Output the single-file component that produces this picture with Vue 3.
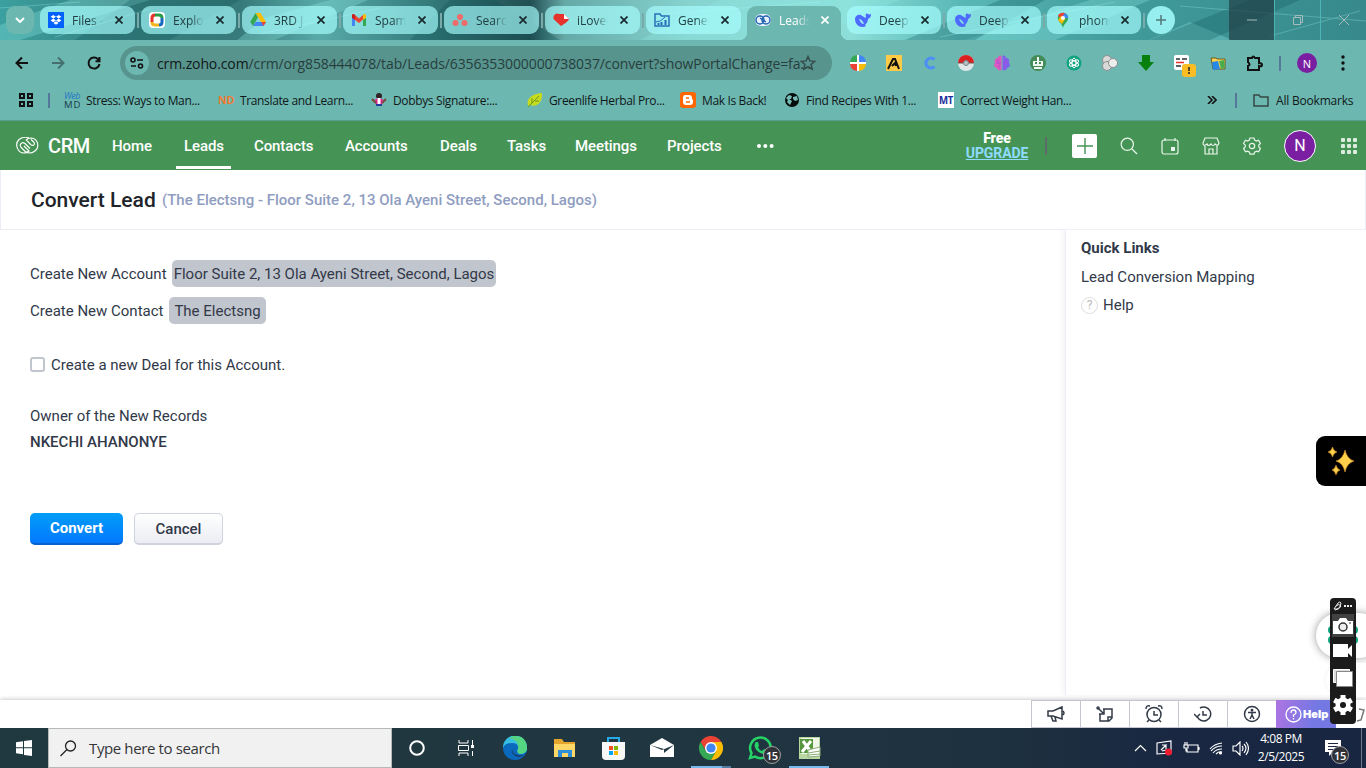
<script setup>
const tabs = [
  { label: 'Files -', icon: 'dropbox' },
  { label: 'Explore', icon: 'swirl' },
  { label: '3RD J', icon: 'drive' },
  { label: 'Spam (', icon: 'gmail' },
  { label: 'Search', icon: 'asana' },
  { label: 'iLovePDF', icon: 'heart' },
  { label: 'Genera', icon: 'folderChart' },
  { label: 'Leads', icon: 'zohoTab', active: true },
  { label: 'DeepS', icon: 'whale' },
  { label: 'DeepS', icon: 'whale' },
  { label: 'phone', icon: 'maps' },
]
const extensions = ['pinwheel', 'apollo', 'cLetter', 'pokeball', 'brain', 'robot', 'gpt', 'spheres', 'download', 'notes', 'folders', 'puzzle']
const bookmarks = [
  { label: 'Stress: Ways to Man...', icon: 'webmd' },
  { label: 'Translate and Learn...', icon: 'nd' },
  { label: 'Dobbys Signature:...', icon: 'dobby' },
  { label: 'Greenlife Herbal Pro...', icon: 'leaf' },
  { label: 'Mak Is Back!', icon: 'blogger' },
  { label: 'Find Recipes With 1...', icon: 'globe' },
  { label: 'Correct Weight Han...', icon: 'mt' },
]
const nav = ['Home', 'Leads', 'Contacts', 'Accounts', 'Deals', 'Tasks', 'Meetings', 'Projects']
const tools = ['megaphone', 'sticky', 'alarm', 'history', 'access']
const apps = ['cortana', 'taskview', 'edge', 'explorer', 'store', 'mail', 'chrome', 'whatsapp', 'excel']

const t = (x, y, size, fill, text, extra = '') =>
  `<text x="${x}" y="${y}" font-size="${size}" fill="${fill}" font-family="Open Sans, sans-serif" text-anchor="middle" ${extra}>${text}</text>`

const whale = '<path fill="#4d6bfe" d="M0 7C0 4 3 2 6 3l1 1c1 0 2 1 3 2l1-1c-1-2 0-3 1-4 0 1 2 2 4 1 0 3-1 4-3 5 0 3-2 5-3 6l1 1c-5 3-11-1-11-7zm4 0c1 3 3 5 5 5-1-3-3-5-5-5z"/>'

const icons = {
  dropbox: '<path fill="#0061ff" d="M0 0h16v16H0z"/><path fill="#fff" d="M5.3 3 2.6 4.8l2.7 1.8L8 4.8zm5.4 0L8 4.8l2.7 1.8 2.7-1.8zM5.3 6.6 2.6 8.4l2.7 1.8L8 8.4zm5.4 0L8 8.4l2.7 1.8 2.7-1.8zM8 9.3l-2.6 1.7L8 12.8l2.6-1.8z"/>',
  swirl: '<rect width="16" height="16" rx="4" fill="#fff"/><g fill="none" stroke-width="3"><path stroke="#e5322d" d="M3 10V6q0-3 3-3"/><path stroke="#279b48" d="M6 3h4q3 0 3 3"/><path stroke="#1769c2" d="M13 6v4q0 3-3 3"/><path stroke="#f2b61a" d="M10 13H6q-3 0-3-3"/></g>',
  drive: '<path fill="#fbbc04" d="M5.5 1h5L16 10h-5z"/><path fill="#34a853" d="M5.5 1 8 5.2 3 14 .2 10z"/><path fill="#4285f4" d="m3 14 2.8-4H16l-2.6 4z"/><path fill="#ea4335" d="M11.5 10H16l-2.6 4z"/>',
  gmail: '<path fill="#4285f4" d="M1 4v10h3V7z"/><path fill="#34a853" d="M15 4v10h-3V7z"/><path fill="#ea4335" d="M1 3q1-2 3 0l4 3.5L12 3v4.5L8 11 1 5.5z"/><path fill="#fbbc04" d="m12 3q2-2 3 0v3l-3 2z"/><path fill="#c5221f" d="M1 3q1-2 3 0v5L1 5.7z"/>',
  asana: '<g fill="#f06a6a"><circle cx="8" cy="5" r="3"/><circle cx="3.5" cy="11" r="3"/><circle cx="12.5" cy="11" r="3"/></g>',
  heart: '<path fill="#e5322d" d="M8 14 1 7.5C-1 4 3 0 6 2h5l5 5q-1 3-8 7z"/><path fill="#fff" d="m11 2 5 5h-5z"/>',
  folderChart: '<path fill="none" stroke="#2470b8" stroke-width="1.5" d="M1 14V2h5l1.5 2H15v10z"/><path stroke="#2470b8" stroke-width="2" d="M4.5 13v-2m3 2v-3m4 3V8"/><path fill="none" stroke="#2470b8" d="M2 10q5 0 9-5"/>',
  zohoTab: '<rect y="2" width="16" height="12" rx="6" fill="#e9f2ff"/><g fill="none" stroke="#2463b0" stroke-width="1.5"><circle cx="5" cy="8" r="4"/><circle cx="11" cy="8" r="4"/><path d="m5 6 6 4"/></g>',
  whale,
  maps: '<path fill="#34a853" d="M2.8 6a5.2 5.2 0 0 1 10.4 0c0 4-4.2 5-5.2 10-1-5-5.2-6-5.2-10z"/><path fill="#4285f4" d="M8 .8A5.2 5.2 0 0 1 13.2 6H8z"/><path fill="#ea4335" d="M8 .8A5.2 5.2 0 0 0 3 4l3 2 4-5z"/><path fill="#fbbc04" d="m3 8 4 4 3-5-4-3z"/><circle cx="8" cy="6" r="2" fill="#fff"/>',
  pinwheel: '<path fill="#34a853" d="M7 7H0a8 8 0 0 1 7-7z"/><path fill="#4285f4" d="M9 7V0a8 8 0 0 1 7 7z"/><path fill="#ea4335" d="M7 9v7a8 8 0 0 1-7-7z"/><path fill="#fbbc04" d="M9 9h7a8 8 0 0 1-7 7z"/><path stroke="#fff" stroke-width="2" d="M8 0v16M0 8h16"/>',
  apollo: '<path fill="#fcca46" d="M0 0h16v16H0z"/><path fill="none" stroke="#111" stroke-width="2" d="m2 14 5-10h2l4 10M6 11l3-3 1 3"/>',
  cLetter: '<path d="M12.5 4.5A5 5 0 1 0 12.5 11.5" fill="none" stroke="#4c8df6" stroke-width="3"/>',
  pokeball: '<circle cx="8" cy="8" r="8" fill="#e1e7e9"/><path fill="#dc1f1f" d="M0 8a8 8 0 0 1 16 0z"/><path stroke="#6d5555" d="M0 8h16"/><circle cx="8" cy="8" r="2.5" fill="#b7c2c5" stroke="#7b8688"/>',
  brain: '<path fill="#df58bd" d="M7.5 1v14C4 16 3 14 3 13-1 12 0 9 1 8c-1-4 1-5 3-5 0-2 2-3 3.5-2z"/><path fill="#7d63ec" d="M8.5 1v14c3.500 1 4.500-1 4.500-2 4-1 3-4 2-5 1-4-1-5-3-5 0-2-2-3-3.500-2z"/><path d="M2 8h5M9 8h5M4 4v3M12 4v3M5 10v3M11 10v3" stroke="#a94adb" fill="none"/>',
  robot: '<circle cx="8" cy="8" r="8" fill="#438b57"/><path fill="#f1f7f2" d="M3 6h10v5H3zm1 6h8v2H4zM7 2h2v4H7z"/><path stroke="#438b57" stroke-width="2" d="M5 8h2m2 0h2"/>',
  gpt: '<circle cx="8" cy="8" r="7.500" fill="#10a37f"/><g fill="none" stroke="#fff"><ellipse cx="8" cy="8" rx="2" ry="5"/><ellipse cx="8" cy="8" rx="2" ry="5" transform="rotate(60 8 8)"/><ellipse cx="8" cy="8" rx="2" ry="5" transform="rotate(120 8 8)"/></g>',
  spheres: '<g fill="#d9d9d9" stroke="#8d8d8d"><circle cx="5" cy="5" r="4.500"/><circle cx="5" cy="11" r="4.500"/><circle cx="11" cy="8" r="4.500" fill="#eee"/></g>',
  download: '<path fill="#07810c" d="M4 0h8v7h4l-8 9-8-9h4z"/>',
  notes: '<rect width="15" height="15" rx="2" fill="#fff"/><path stroke="#263238" stroke-width="1.500" d="M2 4h4m2 0h5M2 11h5"/><path stroke="#e52e2e" stroke-width="1.500" d="M2 7.500h8"/><rect x="8" y="9" width="14" height="13" rx="3" fill="#fbbc24"/><path stroke="#222" stroke-width="1.500" d="M15 12v4m0 1v2"/>',
  folders: '<path fill="#ffd34c" stroke="#705a1e" d="M1 3h5l1 1h8v10H3z"/><path fill="#2787e7" d="m2 7 6-1 2 8-7 1z"/><path fill="#49ad50" d="m9 6 5-1 1 8-4 1z"/>',
  puzzle: '<path fill="none" stroke="#111" stroke-width="2" d="M2 3h4q1-3 3 0h4v5q3 0 3 2t-3 1v4H2v-4q3-1 0-4z"/>',
  webmd: t(8, 7, 9, '#2479c2', 'Web', 'font-style="italic" textLength="16"') + t(8, 15.5, 9.500, '#173c4c', 'MD', 'textLength="16"'),
  nd: t(8, 12, 11, '#ed7b32', 'ND', 'font-weight="700" textLength="16" lengthAdjust="spacingAndGlyphs"'),
  dobby: '<circle cx="8" cy="4" r="3" fill="#312327"/><path fill="#e42494" d="M4 7h8l-1 6H5z"/><path fill="#fff" d="M6.500 6h3v6h-3z"/><path stroke="#78483c" stroke-width="2" d="M1 7l4 4m10-4-4 4"/><path fill="#263e9a" d="M5 12h6v2H5z"/>',
  leaf: '<path fill="#c4dc1d" d="M1 14C-1 6 5 2 15 1c1 9-5 15-12 12z"/><path stroke="#6f9618" fill="none" d="M1 15 12 4M5 11V6m3 3h4"/>',
  blogger: '<rect width="16" height="16" rx="3" fill="#ff6600"/><path d="M5 3h4q3 0 3 3v1l1 1v2q0 3-3 3H6q-3 0-3-3V6q0-3 2-3z" fill="#fff"/><path stroke="#ff6600" stroke-width="1.500" d="M6 6h3M6 10h4"/>',
  globe: '<circle cx="8" cy="8" r="7" fill="#050b0b"/><path fill="#75bdb6" d="M2 6l3-3 3 1-1 3H5l3 2-2 4-3-3 1-2zM9 5l4-1 1 4-3 1-2-2z"/>',
  mt: '<path fill="#fff" d="M0 0h16v16H0z"/>' + t(8, 12, 11, '#172c9b', 'MT', 'font-weight="700" textLength="14" lengthAdjust="spacingAndGlyphs"'),
  megaphone: '<path d="M1 6h5l9-4v12l-9-3H1zM4 11l2 5h3l-1-4M16 6q2 2 0 4"/>',
  sticky: '<path d="M7 4h9v9l-3 3H4V9M16 12h-4v4M2 3l5 5M8 4v5H3"/><circle cx="2" cy="3" r="1"/>',
  alarm: '<circle cx="9" cy="9.500" r="7"/><path d="M9 6v4h4M1 4q0-4 4-3M17 4q0-4-4-3M4 15l-2 2m12-2 2 2"/>',
  history: '<path d="M3 11a7 7 0 1 0 3-8M9 6v4h4M0 9l3 3 3-3"/>',
  access: '<circle cx="9" cy="9" r="7.500"/><circle cx="9" cy="5.200" r=".7"/><path d="M5 7.500h8M9 8v3m0-1-2 4m2-4 2 4"/>',
  cortana: '<circle cx="12" cy="12" r="6.800" fill="none" stroke="#fff" stroke-width="2"/>',
  taskview: '<path fill="none" stroke="#fff" d="M5 4v3h9V4M5 20v-3h9v3M4.500 9.500h10v5h-10zM18.500 4v5m0 6v5"/><path fill="#fff" d="M17 9h3v3h-3z"/>',
  edge: '<circle cx="12" cy="12" r="12" fill="#0b69bd"/><path fill="#36bde2" d="M0 12a12 12 0 0 1 24-1q1 6-6 7c-4 0-4-3-3-5q1-6-6-6Q2 7 0 12z"/><path fill="#55d482" d="M10 0q14-1 14 12 0 5-6 6c-4 0-4-3-3-5 1-5-1-9-9-11z"/><path fill="#193c67" d="M9 13q1 8 12 6-5 4-10 0-3-3-2-6z"/>',
  explorer: '<path fill="#e5a42c" d="M2 3h8l2 3h11v15H2z"/><path fill="#ffd767" d="M2 8h21v13H2z"/><path fill="#2f8ed8" d="M6 14h14v7h-4v-4h-6v4H6z"/>',
  store: '<path fill="none" stroke="#25a9e7" stroke-width="2" d="M7 8V2h11v6"/><path fill="#f8f8f8" d="M1 6h23v14q0 4-4 4H5q-4 0-4-4z"/><path fill="#f05125" d="M8 10h4v4H8z"/><path fill="#7fba00" d="M13 10h4v4h-4z"/><path fill="#00a4ef" d="M8 15h4v4H8z"/><path fill="#ffb900" d="M13 15h4v4h-4z"/>',
  mail: '<path fill="#fff" d="m0 9 12-7 12 7v12H0z"/><path fill="#213843" d="m0 9 12 5 12-5-10 8v-4z"/>',
  chrome: '<path fill="#ea4335" d="M1.600 6a12 12 0 0 1 20.800 0H12l-5.200 9z"/><path fill="#34a853" d="M1.600 6a12 12 0 0 0 10.400 18l5.200-9H6.800z"/><path fill="#fbbc04" d="M22.400 6A12 12 0 0 1 12 24l5.200-9L12 6z"/><circle cx="12" cy="12" r="6" fill="#fff"/><circle cx="12" cy="12" r="4.600" fill="#4285f4"/>',
  whatsapp: '<path fill="none" stroke="#25d366" stroke-width="2.500" d="M2 22 3.500 17A10.300 10.300 0 1 1 7 20.600z"/><path fill="#25d366" d="M8 6h2l1 4-1 1q1 3 4 4l2-2 3 2q-1 4-4 3Q8 16 6.500 10q0-3 1.500-4z"/>',
  excel: '<path fill="#b8d7a2" d="M2 1h21v22H2z"/><path fill="#eff7e9" d="M4 2h18v16H4z"/><path fill="#55973f" d="M3 3h13v14H3z"/><path stroke="#fff" stroke-width="3" d="m6 5 8 11m0-11L5 16"/><path fill="#fff" stroke="#8cad79" d="m11 14 12-3v9l-12 1zM11 17l12-2M11 19l12-1"/>',
}
</script>

<template>
  <div class="screen">
    <header class="browser">
      <div class="strip">
        <svg class="paint" viewBox="0 0 1366 40" preserveAspectRatio="none"><path d="M0 25 70 0h80L20 40H0zM265 18 330 0h38l-93 40h-38zM720 0h180L805 40H640zM1090 0h60l-95 40h-90zM1190 22l42 18h-83z" fill="#8deae4" opacity=".3"/><path d="m130 0 110 0-70 40h-95zM450 0h45l65 40H410zM1000 0h45l-70 40h-70zM1250 0h50l-90 40h-60z" fill="#084d50" opacity=".25"/><path d="M0 8 80 2M55 37l95-28M260 34l120-26M650 15l170-13M940 37l175-35M1180 6l186 15M1270 36l90-25" stroke="#b5fffa" opacity=".25"/></svg>
        <button class="tab-menu"><svg width="10" height="6" fill="none" stroke="#fff" stroke-width="2"><path d="m1 1 4 4 4-4" /></svg></button>
        <div class="tabs">
          <div v-for="(tab, i) in tabs" :key="i" class="tab" :class="{ active: tab.active, beside: i === 6 || i === 7 }">
            <svg class="ico" viewBox="0 0 16 16" v-html="icons[tab.icon]"></svg>
            <span class="tab-label">{{ tab.label }}</span>
            <svg class="close" viewBox="0 0 8 8"><path d="m.5.5 7 7m0-7-7 7" /></svg>
          </div>
        </div>
        <button class="new-tab"><svg width="10" height="10" stroke="#52777b" stroke-width="1.500"><path d="M5 0v10M0 5h10" /></svg></button>
        <div class="win">
          <span><svg width="10" height="10"><path d="M0 5h10" /></svg></span>
          <span><svg width="10" height="10"><path d="M.5 2.500h7v7h-7zM2.500 2V.5h7v7H8" /></svg></span>
          <span><svg width="10" height="10"><path d="m0 0 10 10M10 0 0 10" /></svg></span>
        </div>
      </div>
      <div class="toolbar">
        <div class="nav-icons">
          <svg width="16" height="16"><path d="M14 8H3m5-5.500L2.500 8 8 13.500" /></svg>
          <svg width="16" height="16" class="dim"><path d="M2 8h11M8 2.500 13.500 8 8 13.500" /></svg>
          <svg width="16" height="16"><path d="M13.500 9A5.500 5.500 0 1 1 12 4.200L13.500 6M13.500 2v4.200h-4" /></svg>
        </div>
        <div class="omnibox">
          <span class="site"><svg width="14" height="12" fill="none" stroke="#111" stroke-width="1.600"><circle cx="3" cy="3" r="2" /><path d="M7 3h6M1 9h5" /><circle cx="10.500" cy="9" r="2" /></svg></span>
          <span class="url"><b>crm.zoho.com</b>/crm/org858444078/tab/Leads/6356353000000738037/convert?showPortalChange=fa...</span>
          <svg class="star" viewBox="0 0 16 16"><path d="m8 1.500 1.900 4.400 4.800.4-3.600 3.200 1.100 4.700L8 11.700l-4.200 2.500 1.100-4.700-3.600-3.200 4.800-.4z" /></svg>
        </div>
        <div class="extensions"><svg v-for="e in extensions" :key="e" class="ico" viewBox="0 0 16 16" v-html="icons[e]"></svg></div>
        <i class="tool-sep"></i><span class="profile">N</span><svg class="kebab" width="4" height="16"><circle cx="2" cy="2" r="1.700" /><circle cx="2" cy="8" r="1.700" /><circle cx="2" cy="14" r="1.700" /></svg>
      </div>
      <div class="bookmarks">
        <svg class="grid-ico" width="14" height="14" fill="none" stroke="#111" stroke-width="2"><path d="M1 1h4v4H1zm8 0h4v4H9zM1 9h4v4H1zm8 0h4v4H9z" /></svg><i class="bm-sep"></i>
        <div class="bm-list"><span v-for="b in bookmarks" :key="b.label" class="bookmark"><svg class="ico" viewBox="0 0 16 16" v-html="icons[b.icon]"></svg><span>{{ b.label }}</span></span></div>
        <svg class="more" width="10" height="8"><path d="m1 0 4 4-4 4m4-8 4 4-4 4" /></svg><i class="bm-sep"></i>
        <svg class="folder" width="16" height="13"><path d="M1 1h5l1.500 2H15v9H1z" /></svg><span>All Bookmarks</span>
      </div>
    </header>

    <div class="crm-nav">
      <svg class="crm-logo" viewBox="0 0 24 17"><path d="M14 11.500 9 6.500q-3-2-4.500.8-.8 2.200 1.200 3.700l3.500 3.500q5 3 9 0c6-4 4-13-3-13.500q-3 0-5 2l5 5q2 1 3-.5.600-1.300-.5-2.500L15 2.500M13 1Q8-1 3 2.500c-5 5-1 13.500 5 13.500q3 0 5-2L8 9" /></svg>
      <strong>CRM</strong>
      <nav><a v-for="n in nav" :key="n" :class="{ current: n === 'Leads' }"><span>{{ n }}</span></a></nav>
      <svg class="dots" width="17" height="4" fill="#fff"><circle cx="2" cy="2" r="2" /><circle cx="8.300" cy="2" r="2" /><circle cx="14.600" cy="2" r="2" /></svg>
      <div class="plan"><b>Free</b><a>UPGRADE</a></div><i class="plan-sep"></i>
      <div class="actions">
        <button class="add"><svg width="16" height="16" stroke="#459455" stroke-width="1.400"><path d="M8 0v16M0 8h16" /></svg></button>
        <svg viewBox="0 0 18 18"><circle cx="7.300" cy="7.300" r="6.100" /><path d="m12 12 5 5" /></svg>
        <svg viewBox="0 0 18 18"><rect x="1" y="3" width="16" height="14" rx="2" /><path d="M4 1v3m10-3v3" /><path d="M11 11h2v2h-2z" fill="#fff" stroke-width="2" /></svg>
        <svg viewBox="0 0 18 18"><path d="M3 1h12l2 5q-1 4-4 1-2 3-4 0-3 3-4 0-4 3-4-1zM3 9v8h12V9M7 17v-5h4v5" /></svg>
        <svg viewBox="0 0 18 18"><path d="m7 1-.6 2-2 1-2-.7-1.900 3.200L2.200 8v2L.6 11.500l1.900 3.200 2-.6 2 1 .5 2h4l.6-2 2-1 2 .6 1.800-3.200L15.800 10V8l1.600-1.500-1.900-3.200-2 .7-2-1L11 1z" /><circle cx="9" cy="9" r="2.700" /></svg>
      </div>
      <span class="avatar">N</span>
      <div class="dotgrid"><i v-for="n in 9" :key="n"></i></div>
    </div>

    <section class="titlebar"><h1>Convert Lead</h1><p>(The Electsng - Floor Suite 2, 13 Ola Ayeni Street, Second, Lagos)</p></section>
    <main>
      <form>
        <div class="row"><label class="l-account">Create New Account</label><span class="chip c1"><span>Floor Suite 2, 13 Ola Ayeni Street, Second, Lagos</span></span></div>
        <div class="row"><label class="l-contact">Create New Contact</label><span class="chip c2"><span>The Electsng</span></span></div>
        <div class="check"><i></i><label>Create a new Deal for this Account.</label></div>
        <p class="owner-label">Owner of the New Records</p>
        <p class="owner">NKECHI AHANONYE</p>
        <div class="buttons"><button type="button" class="primary">Convert</button><button type="button" class="secondary">Cancel</button></div>
      </form>
      <aside><h2>Quick Links</h2><a class="mapping">Lead Conversion Mapping</a><a class="help-link"><i>?</i>Help</a></aside>
    </main>
    <footer class="statusbar">
      <span v-for="tool in tools" :key="tool" class="tool"><svg width="18" height="18" viewBox="0 0 18 18" v-html="icons[tool]"></svg></span>
      <span class="help"><svg width="17" height="17" viewBox="0 0 17 17"><circle cx="8.500" cy="8.500" r="7.500" /><path d="M6 7q0-3 2.500-3T11 6.500Q11 8 8.500 9v2m0 1v1.500" /></svg><b>Help</b></span>
      <svg class="trail" width="30" height="28"><path d="m23 9 5 1-3 10-4 1" stroke="#777" fill="none" stroke-width="1.500" /></svg>
    </footer>

    <div class="sparkle"><svg width="26" height="28" viewBox="0 0 26 28"><path fill="#fcd04b" stroke="#d28c24" stroke-width=".6" d="M17 3q2 9 9 11-7 2-9 11-2-9-9-11 7-2 9-11zM4.500 0q1 4 4.500 5-3.500 1-4.500 5Q3.500 6 0 5 3.500 4 4.500 0zM8 18q1 4 4 5-3 1-4 5-1-4-4-5 3-1 4-5z" /></svg></div>
    <div class="bubble"><i></i><i></i></div><div class="bubble2"></div>
    <div class="recorder">
      <div class="handle"><svg width="20" height="10" viewBox="0 0 20 10"><path d="m1 8 4-6q2-2 3 0 0 3-3 6zM3 5q3-3 5 0Q7 8 2 9" fill="none" stroke="#eee" /><path d="M11 4h2v2h-2zm3 0h2v2h-2zm3 0h2v2h-2z" fill="#eee" /></svg></div>
      <div class="photo"><svg width="20" height="16"><path fill="#fff" d="M0 3h5l2-3h6l2 3h5v13H0z" /><circle cx="10" cy="9" r="4" fill="#eee" stroke="#333" stroke-width="1.500" /><path d="M16 5h2" stroke="#333" /></svg></div>
      <div><svg width="20" height="13"><path fill="#fff" d="M0 0h15v5l4-4v12l-4-4v4H0z" /></svg></div>
      <div><svg width="20" height="18"><path fill="#ddd" stroke="#fff" d="M.5.500h16v13H.5z" /><path fill="#fff" stroke="#888" d="M3.500 2.500h16v15h-16z" /></svg></div>
      <div><svg width="20" height="20" viewBox="0 0 20 20"><circle cx="10" cy="10" r="5" fill="none" stroke="#fff" stroke-width="5" /><path stroke="#fff" stroke-width="5" d="M10 0v5m0 10v5M1.300 5l4.300 2.500m8.800 5 4.300 2.500M18.700 5l-4.300 2.500m-8.800 5L1.300 15" /><circle cx="10" cy="10" r="3" fill="#1b1b1b" /></svg></div>
    </div>

    <div class="taskbar">
      <div class="start"><svg width="16" height="16" fill="#fff"><path d="M0 2.200 7 1.300v6H0zM8 1.100 16 0v7.300H8zM0 8.300h7v6l-7-1zM8 8.300h8V16l-8-1z" /></svg></div>
      <div class="search"><svg width="17" height="17" fill="none" stroke="#222" stroke-width="1.300"><circle cx="10.500" cy="6" r="5" /><path d="M7 9.500.5 16" /></svg><span>Type here to search</span></div>
      <div class="apps"><div v-for="a in apps" :key="a" class="app" :class="a"><svg width="24" height="24" viewBox="0 0 24 24" v-html="icons[a]"></svg><b v-if="a === 'whatsapp'" class="badge">15</b></div></div>
      <div class="tray">
        <svg width="13" height="8"><path d="m1 7 5.500-5.500L12 7" /></svg>
        <svg width="18" height="17"><path d="M1 3 15 1v12L1 14zM5 10l5-5H6m4 0v4m-4 2 4-1" /><circle cx="12.500" cy="12" r="3.500" fill="#ed1c2e" stroke="none" /></svg>
        <svg width="17" height="12"><path d="M5 3h10v7H4V7m12-2v3M1 3h4v3H1zm1-3v3m2-3v3M3 6v3h1" /></svg>
        <svg width="14" height="14"><path d="M1 8Q5 3 13 2M2 10Q6 5 13 5M4 12Q7 8 13 8M7 13q3-3 6-2" /><circle cx="11.500" cy="12" r="1" fill="#fff" /></svg>
        <svg width="18" height="15"><path d="M1 5h3l4-4v13l-4-4H1zM10 5q2 2 0 5m2-7q4 4 0 9m2-11q5 6 0 13" /></svg>
      </div>
      <div class="clock"><span>4:08 PM</span><span>2/5/2025</span></div>
      <div class="notify"><svg width="17" height="17"><path fill="#fff" d="M0 0h16v12H8l-4 4v-4H0z" /><path stroke="#1c2940" d="M3 3.500h10M3 6.500h10M3 9.500h6" /></svg><b class="badge">15</b></div>
      <i class="peek"></i>
    </div>
  </div>
</template>

<style>
html, body { margin: 0; overflow: hidden; }
</style>

<style scoped>
* { box-sizing: border-box; }
.screen { position: relative; width: 1366px; height: 768px; overflow: hidden; display: flex; flex-direction: column; background: #fff; color: #313949; font: 15px Roboto, sans-serif; }
button { font: inherit; border: 0; padding: 0; }
h1, h2, p { margin: 0; }
svg { display: block; flex: none; }
.ico { width: 16px; height: 16px; overflow: visible; }
.browser { height: 121px; flex: none; background: #6db7b1; border-bottom: 1px solid #5a9c91; font: 12px "Open Sans", sans-serif; color: #101918; }
.strip { position: relative; height: 40px; display: flex; padding-left: 6px; background: linear-gradient(90deg, #3aa09f 0, #398383 110px, #377a7b 240px, #58aaa9 320px, #347a7b 430px, #224f53 530px, #66aaa8 565px, #86d3d0 690px, #8dded9 850px, #59b8b6 960px, #419b9b 1120px, #37898b 1366px); }
.paint { position: absolute; inset: 0; width: 100%; height: 40px; }
.tab-menu { position: relative; width: 28px; height: 28px; margin: 6px 6px 0 0; border-radius: 9px; background: #6db7b1; display: grid; place-items: center; }
.tabs { position: relative; display: grid; grid-template-columns: repeat(7, 95px) 94px repeat(3, 94px); gap: 6px; height: 40px; }
.tab { position: relative; height: 28px; margin-top: 6px; padding: 0 16px 0 8px; border-radius: 9px; background: #a9ffffa8; display: flex; align-items: center; }
.tab:not(.beside)::after { content: ''; position: absolute; right: -4px; top: 7px; width: 2px; height: 15px; background: #79aaa9; }
.tab-label { width: 34px; margin-left: 8px; overflow: hidden; white-space: nowrap; color: #214044; mask-image: linear-gradient(90deg, #000 18px, transparent 31px); }
.close { width: 8px; height: 8px; margin-left: auto; margin-right: -4px; fill: none; stroke: #17292c; stroke-width: 1.700; }
.active { height: 34px; border-radius: 9px 9px 0 0; padding-bottom: 6px; background: #6db7b1; }
.active::before { content: ''; position: absolute; left: -8px; right: -8px; bottom: 0; height: 8px; background: radial-gradient(circle at 0 0, transparent 8px, #6db7b1 8.500px) left / 8px 8px no-repeat, radial-gradient(circle at 100% 0, transparent 8px, #6db7b1 8.500px) right / 8px 8px no-repeat; }
.active .tab-label { color: #fff; }
.active .close { stroke: #fff; }
.new-tab { position: relative; width: 28px; height: 28px; margin: 6px 0 0 6px; border-radius: 50%; background: #96eeee; display: grid; place-items: center; }
.win { position: relative; margin-left: auto; display: flex; width: 137px; }
.win span { flex: 1; display: grid; place-items: center; border-left: 1px solid #4cb4b4; }
.win span:first-child { background: #213f45b0; border: 0; }
.win svg { fill: none; stroke: #a5bcbc; }
.toolbar { position: relative; z-index: 1; height: 46px; display: flex; align-items: center; background: #6db7b1; border-radius: 8px 8px 0 0; }
.nav-icons { display: flex; gap: 20px; width: 120px; padding-left: 14px; fill: none; stroke: #111; stroke-width: 2; }
.dim { opacity: .42; }
.omnibox { display: flex; align-items: center; width: 712px; height: 34px; border-radius: 17px; background: #58948e; padding: 0 16px 0 5px; color: #273e3c; }
.site { width: 24px; height: 24px; border-radius: 50%; background: #6db7b1; display: grid; place-items: center; }
.url { width: 635px; margin-left: 8px; font-size: 14px; letter-spacing: -.11px; white-space: nowrap; }
.url b { font-weight: 400; color: #101817; }
.star { width: 16px; height: 16px; margin-left: auto; fill: none; stroke: #354c4a; stroke-width: 1.500; }
.extensions { display: flex; gap: 20px; margin-left: 18px; }
.tool-sep, .bm-sep { width: 2px; height: 15px; background: #55789a; }
.tool-sep { margin-left: 17px; }
.profile { width: 20px; height: 20px; border-radius: 50%; background: #7b1fa2; color: #fff; display: grid; place-items: center; margin-left: 16px; font-size: 11px; }
.kebab { margin-left: 24px; fill: #111; }
.bookmarks { display: flex; height: 34px; align-items: center; padding: 0 0 6px 19px; }
.bookmarks { padding-bottom: 6px; }
.grid-ico { margin-right: 15px; }
.bm-list { display: grid; grid-template-columns: 154px 153px 156px 153px 104px 154px 160px; margin-left: 14px; }
.bookmark { display: flex; align-items: center; gap: 6px; white-space: nowrap; letter-spacing: -.36px; }
.more { margin: 0 18px 0 109px; fill: none; stroke: #111; stroke-width: 1.600; }
.folder { margin: 0 7px 0 16px; fill: none; stroke: #354846; stroke-width: 1.500; }
.folder + span { letter-spacing: -.2px; white-space: nowrap; }
.crm-nav { height: 49px; flex: none; display: flex; align-items: center; padding-left: 16px; background: #459455; color: #fff; }
.crm-logo { width: 24px; height: 17px; fill: none; stroke: #fff; stroke-width: 1.150; }
.crm-nav strong { width: 42px; margin-left: 8px; font-size: 20px; font-weight: 500; letter-spacing: -.4px; }
.crm-nav nav { display: grid; grid-template-columns: 72px 70px 91px 95px 67px 68px 92px 90px; margin-left: 22px; height: 49px; font-weight: 500; letter-spacing: -.1px; }
.crm-nav nav a { position: relative; display: flex; align-items: center; }
.crm-nav .current::after { content: ''; position: absolute; left: -8px; bottom: 1px; width: 55px; height: 3px; background: #fff; }
.plan { width: 64px; margin-left: 191px; display: flex; flex-direction: column; text-align: center; font-size: 14px; line-height: 15px; font-weight: 700; letter-spacing: -.1px; }
.plan a { color: #8edbff; text-decoration: underline; }
.plan-sep { width: 2px; height: 18px; background: #5e6b68; margin-left: 16px; }
.actions { display: flex; align-items: center; gap: 23px; margin-left: 25px; }
.actions > svg { width: 18px; height: 18px; fill: none; stroke: #e9f6eb; stroke-width: 1.200; }
.add { width: 25px; height: 24px; border-radius: 2px; background: #fff; display: grid; place-items: center; }
.avatar { width: 32px; height: 32px; margin-left: 23px; border: 1px solid #fff; border-radius: 50%; background: #7b1fa2; display: grid; place-items: center; font-size: 16px; }
.dotgrid { display: grid; grid-template-columns: repeat(3, 4px); gap: 2px; margin-left: 25px; }
.dotgrid i { width: 4px; height: 4px; border-radius: 1px; background: #dceddf; }
.titlebar { height: 60px; flex: none; border: 1px solid #ebedf6; border-top: 0; display: flex; align-items: center; padding-left: 30px; }
h1 { width: 131px; font-size: 21px; font-weight: 500; color: #202328; white-space: nowrap; }
.titlebar p { font-weight: 500; color: #8f9dc1; white-space: nowrap; }
main { display: flex; height: 465px; flex: none; }
form { width: 1065px; padding: 30px; }
.row { display: flex; align-items: center; height: 27px; margin-bottom: 10px; white-space: nowrap; }
.l-account { width: 142px; }
.l-contact { width: 139px; }
.chip { height: 27px; display: flex; align-items: center; justify-content: center; background: #c1c5cd; border-radius: 5px; }
.c1 { width: 324px; }
.c2 { width: 97px; }
.check { display: flex; align-items: center; gap: 6px; height: 20px; margin-top: 31px; }
.check i { width: 15px; height: 15px; margin-top: -2px; border: 2px solid #c1c5cd; border-radius: 3px; }
.owner-label { height: 20px; line-height: 20px; margin-top: 31px; }
.owner { height: 20px; line-height: 20px; margin-top: 6px; font-weight: 500; }
.buttons { display: flex; gap: 11px; margin-top: 61px; }
.buttons button { height: 32px; border-radius: 5px; font-weight: 500; }
.primary { width: 93px; color: #fff; background: linear-gradient(#029df7, #0379ff); border-bottom: 2px solid #0960cf; }
.buttons .primary { font-weight: 700; }
.secondary { width: 89px; color: #313949; background: linear-gradient(#fff, #ebedf3); border: 1px solid #cfd2df; border-bottom-width: 2px; }
aside { flex: 1; border-left: 1px solid #ebedf5; box-shadow: -3px 0 5px #f6f6f9; padding: 8px 15px; display: flex; flex-direction: column; }
h2 { font-size: 15px; line-height: 20px; font-weight: 700; }
.mapping { height: 20px; line-height: 20px; margin-top: 9px; }
.help-link { height: 20px; display: flex; align-items: center; margin-top: 8px; }
.help-link i { width: 17px; height: 17px; margin-right: 5px; border: 1px solid #ddd; border-radius: 50%; display: grid; place-items: center; color: #bbb; font-size: 12px; font-style: normal; }
.statusbar { height: 28px; margin-top: 5px; flex: none; display: flex; justify-content: flex-end; box-shadow: 0 -1px 4px #ccc; }
.tool { width: 49px; border: 1px solid #c5c7d0; border-right: 0; display: grid; place-items: center; fill: none; stroke: #333a47; stroke-width: 1.500; }
.help { width: 60px; padding: 0 0 0 9px; display: flex; align-items: center; gap: 1px; background: linear-gradient(100deg, #ad74e2, #7378e3 65%); color: #fff; font: 700 11px Inter, sans-serif; }
.help svg { fill: none; stroke: #fff; stroke-width: 1.300; }
.sparkle { position: absolute; right: 0; top: 436px; width: 50px; height: 50px; background: #000; border-radius: 9px 0 0 9px; display: grid; place-items: center; }
.bubble { position: absolute; left: 1316px; top: 613px; width: 65px; height: 45px; border-radius: 23px; background: #fff; box-shadow: 0 0 8px #999; }
.bubble i { position: absolute; left: 12px; top: 13px; width: 30px; height: 8px; border-radius: 4px; background: #10a37f; }
.bubble i + i { top: 23px; }
.bubble2 { position: absolute; left: 1326px; top: 663px; width: 65px; height: 34px; border-radius: 17px; background: #fff; box-shadow: 0 0 4px #eee; }
.recorder { position: absolute; left: 1330px; top: 598px; width: 26px; height: 126px; border-radius: 4px; background: #1b1b1b; }
.recorder div { display: grid; place-items: center; height: 27px; }
.recorder .handle { height: 16px; }
.recorder .photo { height: 23px; margin: 0 2px; background: #414141; }
.taskbar { height: 40px; flex: none; position: relative; display: flex; background: linear-gradient(90deg, #203840, #203640 50%, #1d303f 75%, #192742 86%, #192641); color: #fff; font-family: "Open Sans", sans-serif; }
.start { width: 48px; display: grid; place-items: center; }
.search { width: 344px; background: #f1f1f1; border: 1px solid #b7babb; display: flex; align-items: center; padding-left: 11px; color: #343638; font-size: 15px; letter-spacing: -.38px; }
.search span { margin-left: 12px; }
.apps { display: flex; width: 442px; }
.app { position: relative; flex: 1; display: grid; place-items: center; }
.chrome::after, .excel::after { content: ''; position: absolute; bottom: 0; left: 4px; width: 40px; height: 2px; background: #76b9ed; }
.chrome::after { background: linear-gradient(90deg, #76b9ed 31px, #527da0 31px); }
.badge { position: absolute; width: 18px; height: 18px; border: 1px solid #9b9fa2; border-radius: 50%; background: #303238; display: grid; place-items: center; font-size: 11px; line-height: 1; font-weight: 600; letter-spacing: -.4px; }
.whatsapp .badge { left: 27px; top: 18px; }
.tray { position: absolute; left: 1134px; top: 0; height: 40px; display: flex; align-items: center; gap: 9px; fill: none; stroke: #fff; stroke-width: 1.150; }
.clock { position: absolute; left: 1251px; top: 2px; width: 60px; display: flex; flex-direction: column; align-items: center; font-size: 12px; line-height: 18px; letter-spacing: -.45px; white-space: nowrap; }
.notify { position: absolute; left: 1325px; top: 12px; }
.notify .badge { left: 6px; top: 6px; }
.peek { position: absolute; right: 4px; top: 0; height: 40px; border-left: 1px solid #6f7789; }
</style>
